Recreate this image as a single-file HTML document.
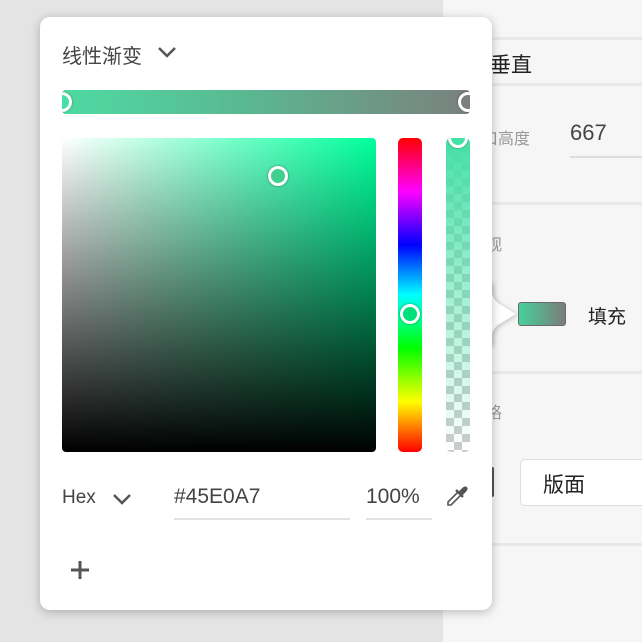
<!DOCTYPE html>
<html><head><meta charset="utf-8"><style>
*{margin:0;padding:0;box-sizing:border-box}
body{width:642px;height:642px;overflow:hidden;background:#e4e4e4;position:relative;font-family:"Liberation Sans","Noto Sans CJK SC",sans-serif;color:#333}
.panel{position:absolute;left:443px;top:0;width:199px;height:642px;background:#f6f6f6}
.hl{position:absolute;left:443px;width:199px;height:3px;background:#e8e8e8}
.t{position:absolute;white-space:nowrap}
.pop{position:absolute;left:40px;top:17px;width:452px;height:593px;background:#fff;border-radius:10px;box-shadow:0 2px 10px rgba(0,0,0,.25)}
.a{position:absolute}
.handle{position:absolute;width:20px;height:20px;border-radius:50%;border:3px solid #fff;box-shadow:0 0 2px rgba(0,0,0,.5);background:#45e0a7}
</style></head><body>
<div class="panel"></div>
<div class="hl" style="top:37px"></div>
<div class="hl" style="top:83px"></div>
<div class="hl" style="top:202px"></div>
<div class="hl" style="top:371px"></div>
<div class="hl" style="top:543px"></div>
<div class="t" style="left:490px;top:49px;font-size:21px;color:#222">垂直</div>
<div class="t" style="left:482px;top:125px;font-size:16px;color:#999">口高度</div>
<div class="t" style="left:570px;top:120px;font-size:22px;color:#444">667</div>
<div class="a" style="left:570px;top:156px;width:72px;height:2px;background:#ddd"></div>
<div class="t" style="left:486px;top:231px;font-size:16px;color:#999">观</div>
<div class="a" style="left:518px;top:302px;width:48px;height:24px;border-radius:3px;background:linear-gradient(90deg,#45d09b,#7c7c7c);border:1px solid #6a6a6a"></div>
<div class="t" style="left:588px;top:302px;font-size:19px;color:#222">填充</div>
<div class="t" style="left:486px;top:399px;font-size:16px;color:#999">格</div>
<div class="a" style="left:486px;top:467px;width:8px;height:30px;background:#555;border-radius:2px"></div>
<div class="a" style="left:520px;top:459px;width:130px;height:47px;background:#fff;border:1px solid #ddd;border-radius:5px"></div>
<div class="t" style="left:543px;top:469px;font-size:21px;color:#222">版面</div>
<svg class="a" style="left:484px;top:282px;filter:drop-shadow(2px 1px 2px rgba(0,0,0,.2))" width="40" height="64"><path d="M0 0 L8 0 L8 10 Q8 16 14 21 L32 32 L14 43 Q8 48 8 54 L8 64 L0 64Z" fill="#fff"/></svg>
<div class="pop">
<div class="t" style="left:22px;top:23px;font-size:20px;color:#444">线性渐变</div>
<svg class="a" style="left:117px;top:28px" width="20" height="14"><path d="M2 3 L10 11 L18 3" fill="none" stroke="#555" stroke-width="2.5"/></svg>
<div class="a" style="left:22px;top:73px;width:408px;height:24px;border-radius:4px;overflow:hidden;background:linear-gradient(90deg,#4edaa2,#5ab891 45%,#7b807d);">
<div style="position:absolute;left:-10px;top:2px;width:20px;height:20px;border-radius:50%;border:3px solid #fff;background:#45e0a7;box-shadow:0 0 2px rgba(0,0,0,.4)"></div>
<div style="position:absolute;left:396px;top:2px;width:20px;height:20px;border-radius:50%;border:3px solid #fff;background:#7b807d;box-shadow:0 0 2px rgba(0,0,0,.4)"></div>
</div>
<div class="a" style="left:22px;top:121px;width:314px;height:314px;border-radius:4px;background:linear-gradient(to top,#000,rgba(0,0,0,0)),linear-gradient(to right,#fff,#00ff9c)"></div>
<div class="handle" style="left:228px;top:149px;background:#3fcf8f"></div>
<div class="a" style="left:358px;top:121px;width:24px;height:314px;border-radius:5px;background:linear-gradient(to bottom,#f00,#f0f 17%,#00f 34%,#0ff 50%,#0f0 67%,#ff0 84%,#f00)"></div>
<div class="handle" style="left:360px;top:287px;background:#00e07a"></div>
<div class="a" style="left:406px;top:121px;width:24px;height:314px;border-radius:5px;overflow:hidden;background-color:#fff;background-image:linear-gradient(45deg,#ccc 25%,transparent 25%,transparent 75%,#ccc 75%),linear-gradient(45deg,#ccc 25%,transparent 25%,transparent 75%,#ccc 75%);background-size:16px 16px;background-position:0 0,8px 8px"><div style="width:100%;height:100%;background:linear-gradient(to bottom,#45e0a7,rgba(69,224,167,0))"></div>
<div style="position:absolute;left:2px;top:-10px;width:20px;height:20px;border-radius:50%;border:3px solid #fff;background:#45e0a7;box-shadow:0 0 2px rgba(0,0,0,.4)"></div></div>
<div class="t" style="left:22px;top:470px;font-size:19px;color:#444">Hex</div>
<svg class="a" style="left:72px;top:475px" width="20" height="14"><path d="M2 3 L10 11 L18 3" fill="none" stroke="#555" stroke-width="2.5"/></svg>
<div class="t" style="left:134px;top:468px;font-size:21px;color:#444">#45E0A7</div>
<div class="a" style="left:134px;top:501px;width:176px;height:2px;background:#e2e2e2"></div>
<div class="t" style="left:326px;top:468px;font-size:21px;color:#444">100%</div>
<div class="a" style="left:326px;top:501px;width:66px;height:2px;background:#e2e2e2"></div>
<svg class="a" style="left:404px;top:466px" width="26" height="26"><path d="M4 22 L4 19 L14 9 L17 12 L7 22Z" fill="none" stroke="#555" stroke-width="1.6"/><path d="M12 7 L19 14 M15 10 L19 6 Q21 4 22 5 Q23 6 21 8 L17 12" fill="#555" stroke="#555" stroke-width="2.5"/></svg>
<svg class="a" style="left:29px;top:542px" width="22" height="22"><path d="M11 2 V20 M2 11 H20" stroke="#555" stroke-width="3"/></svg>
</div>
</body></html>
